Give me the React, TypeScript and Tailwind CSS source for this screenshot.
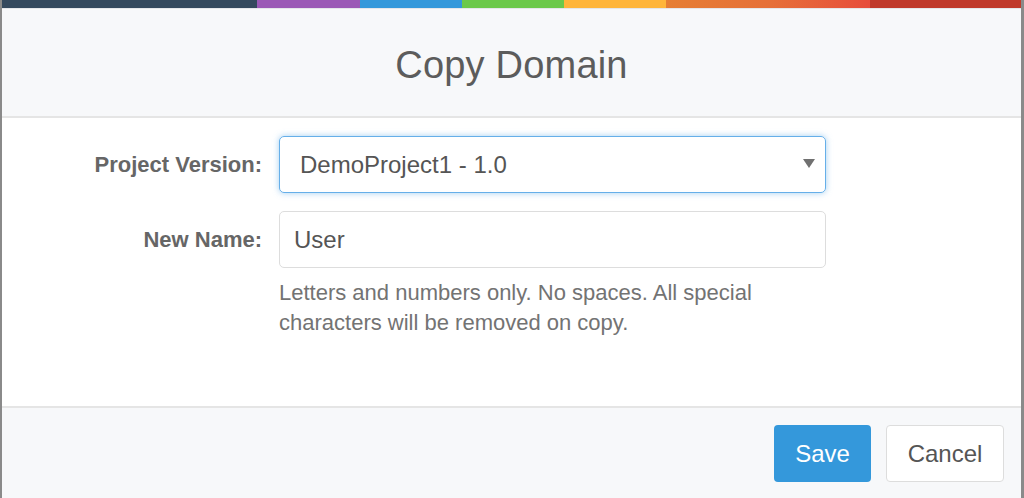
export default function App() {
  return (
    <div className="w-[1024px] h-[498px] overflow-hidden bg-white font-['Liberation_Sans',Arial,sans-serif]">
      <div className="flex flex-col h-full border-l-2 border-r-[3px] border-l-[#8a8a8a] border-r-[#8a8a8a]">
        {/* colour strip */}
        <div className="flex h-2 shrink-0">
          <div className="w-[255px] bg-[#34495e]" />
          <div className="w-[103px] bg-[#9b59b6]" />
          <div className="w-[102px] bg-[#3498db]" />
          <div className="w-[102px] bg-[#6bc94b]" />
          <div className="w-[102px] bg-[#ffb53a]" />
          <div className="w-[204px] bg-gradient-to-r from-[#e67e34] via-[#e67038] to-[#e74c3c]" />
          <div className="flex-1 bg-[#c0392b]" />
        </div>

        {/* header */}
        <div className="h-[110px] shrink-0 bg-[#f7f8fa] border-t border-[#e4e6ea] border-b-2 border-b-[#e5e5e5] flex items-center justify-center">
          <h1 className="text-[38px] font-light text-[#5c5c5c] tracking-[0.2px] mt-[5px]">Copy Domain</h1>
        </div>

        {/* body */}
        <div className="flex-1 pt-[18px]">
          <div className="flex items-center">
            <label className="w-[277px] pr-[17px] text-right text-[22px] font-bold text-[#666]">Project Version:</label>
            <div className="relative w-[547px] h-[57px] rounded-[5px] border border-[#66afe9] shadow-[0_0_6px_rgba(102,175,233,0.6)] flex items-center pl-[20px] text-[24px] text-[#555]">
              DemoProject1 - 1.0
              <span className="absolute right-[10px] top-[22px] w-0 h-0 border-l-[6px] border-r-[6px] border-t-[9px] border-l-transparent border-r-transparent border-t-[#707070]" />
            </div>
          </div>
          <div className="flex items-center mt-[18px]">
            <label className="w-[277px] pr-[17px] text-right text-[22px] font-bold text-[#666]">New Name:</label>
            <div className="w-[547px] h-[57px] rounded-[5px] border border-[#dddddd] flex items-center pl-[14px] text-[24px] text-[#555]">
              User
            </div>
          </div>
          <p className="ml-[277px] mt-[10px] w-[520px] text-[22px] leading-[30px] text-[#737373]">
            Letters and numbers only. No spaces. All special characters will be removed on copy.
          </p>
        </div>

        {/* footer */}
        <div className="h-[92px] shrink-0 bg-[#f7f8fa] border-t-2 border-[#e5e5e5] flex items-start justify-end gap-[15px] pt-[17px] pr-[17px]">
          <button className="w-[97px] h-[57px] rounded-[4px] bg-[#3498db] text-white text-[24px]">Save</button>
          <button className="w-[118px] h-[57px] rounded-[4px] bg-white border border-[#dddddd] text-[#555] text-[24px]">Cancel</button>
        </div>
      </div>
    </div>
  );
}
